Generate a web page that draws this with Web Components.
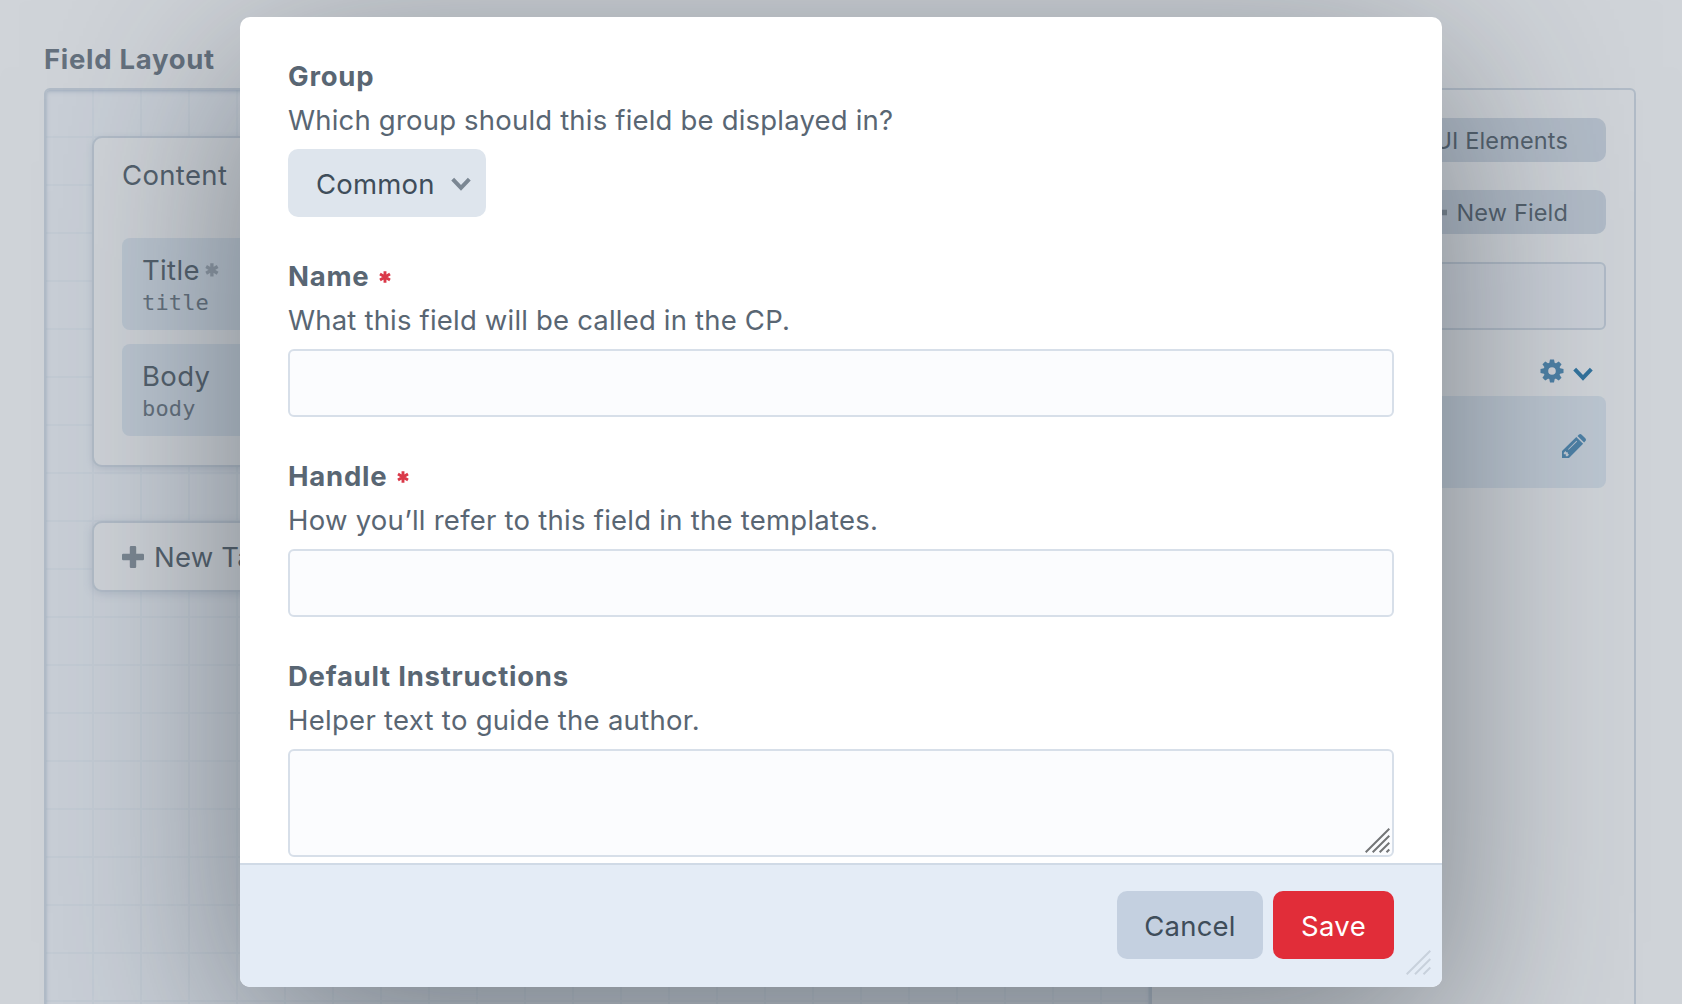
<!DOCTYPE html>
<html lang="en">
<head>
<meta charset="utf-8">
<title>Field Layout</title>
<style>
html,body{margin:0;height:100%;overflow:hidden}
body{
  --text:#3f4d5a;--medium:#596673;--gray050:#f4f7fd;--gray100:#e4ecf6;--gray200:#cfd9e5;--page:#fdfdff;
  background:var(--page);color:var(--text);font:430 27.5px/40px Inter,sans-serif;letter-spacing:.19px;
}
</style>
</head>
<body>
<cp-page>
  <layout-designer>
    <layout-tab slot="workspace" name="Content">
      <field-item name="Title" handle="title" required></field-item>
      <field-item name="Body" handle="body"></field-item>
    </layout-tab>
    <new-tab slot="workspace">New Tab</new-tab>
    <field-library slot="library"></field-library>
  </layout-designer>
  <cp-modal slot="modal">
    <cp-field label="Group" instructions="Which group should this field be displayed in?"><cp-select>Common</cp-select></cp-field>
    <cp-field label="Name" required instructions="What this field will be called in the CP."><cp-input></cp-input></cp-field>
    <cp-field label="Handle" required instructions="How you’ll refer to this field in the templates." style="letter-spacing:.25px"><cp-input></cp-input></cp-field>
    <cp-field label="Default Instructions" instructions="Helper text to guide the author." style="letter-spacing:.28px"><cp-input multiline></cp-input></cp-field>
    <cp-button slot="actions">Cancel</cp-button>
    <cp-button slot="actions" primary style="letter-spacing:.4px">Save</cp-button>
  </cp-modal>
</cp-page>
<script>
const define = (name, render) => customElements.define(name, class extends HTMLElement {
  connectedCallback() {
    if (this.shadowRoot) return;
    this.attachShadow({ mode: 'open' }).innerHTML = render(this);
  }
});

const ICONS = {
  asterisk: [12, 12, '<path d="M6 .2v11.6M1 3.1l10 5.8M11 3.1L1 8.9" stroke="currentColor" stroke-width="2.9" fill="none"/>'],
  chevron: [20, 14, '<path d="M1.7 2.2L10 10.8l8.300-8.600" stroke="currentColor" stroke-width="4" fill="none"/>'],
  plus: [22, 22, '<path d="M9 0h4q1.200 0 1.200 1.200v6.600h6.600q1.200 0 1.200 1.200v4q0 1.200-1.200 1.200h-6.600v6.600q0 1.200-1.200 1.200h-4q-1.200 0-1.200-1.200v-6.600h-6.600q-1.200 0-1.200-1.200v-4q0-1.200 1.200-1.200h6.600v-6.600q0-1.200 1.200-1.200z" fill="currentColor"/>'],
  gear: [24, 24, '<g fill="currentColor"><path fill-rule="evenodd" d="M12 3.500a8.500 8.500 0 1 0 0 17a8.500 8.500 0 0 0 0-17zm0 4.700a3.800 3.800 0 1 1 0 7.600a3.800 3.800 0 0 1 0-7.600z"/>' +
    [0,45,90,135,180,225,270,315].map(a => `<path transform="rotate(${a} 12 12)" d="M10 .5h4l.9 4.500h-5.800z"/>`).join('') + '</g>'],
  pencil: [24, 24, '<path fill="currentColor" fill-rule="evenodd" d="M0 24v-7L14.300 3l6.800 6.700L7 24zM3.500 17l-1.700 1.700v1.600h2v2h1.700l1.500-1.500-1.200-1.200v-1.400h-1.400zM6 15.200l8.500-8.400.6.600-8.500 8.400zM15.500 1.900L17 .6q1.300-1.100 2.700.1l3.600 3.600q1.300 1.400.1 2.700l-1.300 1.500z"/>'],
};
const icon = (name, scale = 1) => {
  const [w, h, body] = ICONS[name];
  return `<svg class="${name}" width="${w * scale}" height="${h * scale}" viewBox="0 0 ${w} ${h}" aria-hidden="true">${body}</svg>`;
};

define('cp-page', () => `<style>
  :host{display:block;position:relative;height:1004px;overflow:hidden}
  main{display:flex;flex-direction:column;box-sizing:border-box;height:1100px;padding:39px 46px 0 44px}
  h2{margin:0 0 9px;font-size:27.5px;line-height:40px;font-weight:700;letter-spacing:.7px;color:var(--medium)}
  .shade{position:absolute;inset:0;background:rgba(123,135,147,.35)}
  .overlay{position:absolute;inset:0;display:flex;justify-content:center;align-items:flex-start;padding-top:17px}
</style>
<main><h2>Field Layout</h2><slot></slot></main>
<div class="shade"></div>
<div class="overlay"><slot name="modal"></slot></div>`);

define('layout-designer', () => `<style>
  :host{display:flex;flex:1;box-sizing:border-box;border:2px solid var(--gray200);border-radius:6px;overflow:hidden}
  .workspace{flex:1;display:flex;flex-direction:column;align-items:flex-start;gap:54px;padding:46px;
    background-color:var(--gray050);
    background-image:linear-gradient(to right,#ebf1f9 2px,transparent 2px),linear-gradient(to bottom,#ebf1f9 2px,transparent 2px);
    background-size:48px 48px;background-position:46px 46px;
    border-right:2px solid var(--gray200);box-shadow:inset 0 2px 5px -1px rgba(96,125,159,.4),inset 0 0 3px rgba(96,125,159,.2)}
  .library{width:426px;padding:28px;display:flex;flex-direction:column}
</style>
<div class="workspace"><slot name="workspace"></slot></div>
<div class="library"><slot name="library"></slot></div>`);

define('layout-tab', el => `<style>
  :host{display:block;box-sizing:border-box;width:440px;height:331px;border:2px solid var(--gray200);border-radius:10px;background:var(--page);box-shadow:0 2px 6px rgba(96,125,159,.2);letter-spacing:.35px}
  header{height:73px;box-sizing:border-box;padding:17px 28px 0}
  .items{display:flex;flex-direction:column;gap:14px;padding:27px 28px 0 28px}
</style>
<header>${el.getAttribute('name')}</header><div class="items"><slot></slot></div>`);

define('field-item', el => `<style>
  :host{display:flex;flex-direction:column;box-sizing:border-box;height:92px;padding:12px 20px 0;border-radius:8px;background:#e0eaf4}
  .name{display:flex;align-items:center;gap:5px}
  .name svg{color:#9aa5b1}
  .handle{font:22px/28px "DejaVu Sans Mono",monospace;letter-spacing:.15px;color:var(--medium);margin-top:-1px}
</style>
<div class="name">${el.getAttribute('name')}${el.hasAttribute('required') ? icon('asterisk', 1.15) : ''}</div>
<div class="handle">${el.getAttribute('handle')}</div>`);

define('new-tab', () => `<style>
  :host{display:flex;align-items:center;gap:10px;box-sizing:border-box;width:230px;height:71px;padding:0 28px;border:2px solid var(--gray200);border-radius:10px;background:var(--page);box-shadow:0 2px 8px rgba(96,125,159,.25)}
  svg{color:#7b8793}
  span{white-space:nowrap}
</style>${icon('plus')}<span><slot></slot></span>`);

define('field-library', () => `<style>
  :host{display:flex;flex-direction:column;font-size:23.5px;letter-spacing:.15px}
  .tabs{display:flex;height:44px}
  .tabs div,.new{display:flex;align-items:center;justify-content:flex-end;height:44px;box-sizing:border-box;padding:1px 38px 0 0;background:var(--gray200);flex:1}
  .tabs div:first-child{background:#9aa5b1;color:#fff;border-radius:10px 0 0 10px;justify-content:center;padding:0}
  .tabs div:last-child{border-radius:0 10px 10px 0}
  .new{flex:none;gap:9px;margin-top:28px;border-radius:10px}
  .new svg{color:#7b8793}
  .search{height:68px;box-sizing:border-box;margin-top:28px;border:2px solid var(--gray200);border-radius:6px;background:#f6f8fd}
  .group{display:flex;justify-content:flex-end;align-items:flex-start;gap:9px;height:66px;padding:29px 13px 0 0;box-sizing:border-box;color:#0b69a3}
  .group .gear,.pencil{color:#357db0}
  .group .chevron{margin-top:8px}
  .item{display:flex;justify-content:flex-end;align-items:center;height:92px;box-sizing:border-box;padding:8px 20px 0 0;background:#e0eaf4;border-radius:8px}
</style>
<div class="tabs"><div>Fields</div><div>UI Elements</div></div>
<div class="new">${icon('plus', .86)}<span>New Field</span></div>
<div class="search"></div>
<div class="group">${icon('gear')}${icon('chevron')}</div>
<div class="item">${icon('pencil')}</div>`);

define('cp-modal', () => `<style>
  :host{display:flex;flex-direction:column;width:1202px;height:970px;border-radius:10px;background:#fff;overflow:hidden;box-shadow:0 50px 200px rgba(31,41,51,.5)}
  .body{flex:1;min-height:0;display:flex;flex-direction:column;gap:39px;padding:39px 48px 0;overflow:hidden}
  footer{position:relative;display:flex;justify-content:flex-end;gap:10px;box-sizing:border-box;height:124px;padding:26px 48px 0;border-top:2px solid #d0dae6;background:var(--gray100)}
  .resize{position:absolute;right:11px;bottom:12px;color:#c8d1dc}
</style>
<div class="body"><slot></slot></div>
<footer><slot name="actions"></slot>
<svg class="resize" width="25" height="25" viewBox="0 0 25 25"><path d="M.7 24.300L24.300.7M9 24.300L24.300 9M17.500 24.300l6.800-6.800" stroke="currentColor" stroke-width="2" fill="none"/></svg></footer>`);

define('cp-field', el => `<style>
  :host{display:flex;flex-direction:column;flex:none;align-items:stretch;color:var(--medium)}
  .label{display:flex;align-items:center;gap:10px;font-size:27.5px;font-weight:700;letter-spacing:.75px;line-height:40px}
  .label svg{color:#da3949;margin-top:2px}
  .instructions{margin:4px 0 9px}
</style>
<div class="label">${el.getAttribute('label')}${el.hasAttribute('required') ? icon('asterisk') : ''}</div>
<div class="instructions">${el.getAttribute('instructions')}</div>
<slot></slot>`);

define('cp-select', () => `<style>
  :host{display:flex;align-self:flex-start;align-items:center;justify-content:space-between;box-sizing:border-box;width:198px;height:68px;padding:1px 15px 0 28px;border-radius:10px;background:#dee5ed;color:var(--text)}
</style><span><slot></slot></span>${icon('chevron').replace('<svg', '<svg color="#7b8793"')}`);

define('cp-input', el => `<style>
  :host{display:flex;justify-content:flex-end;align-items:flex-end;box-sizing:border-box;height:${el.hasAttribute('multiline') ? 108 : 68}px;padding:2px;border:2px solid #d7dfe9;border-radius:6px;background:#fbfcfe;color:#737577}
</style>${el.hasAttribute('multiline') ? '<svg width="25" height="25" viewBox="0 0 25 25"><path d="M.7 24.300L24.300.7M7.700 24.300L24.300 7.700M14.700 24.300l9.600-9.600M21.500 24.300l2.800-2.800" stroke="currentColor" stroke-width="2" fill="none"/></svg>' : ''}`);

define('cp-button', el => `<style>
  :host{display:flex;align-items:center;justify-content:center;box-sizing:border-box;width:${el.hasAttribute('primary') ? 121 : 146}px;height:68px;padding-top:1px;border-radius:10px;background:${el.hasAttribute('primary') ? '#e12d39' : '#c4d0e0'};color:${el.hasAttribute('primary') ? '#fff' : 'var(--text)'}}
</style><slot></slot>`);
</script>
</body>
</html>
